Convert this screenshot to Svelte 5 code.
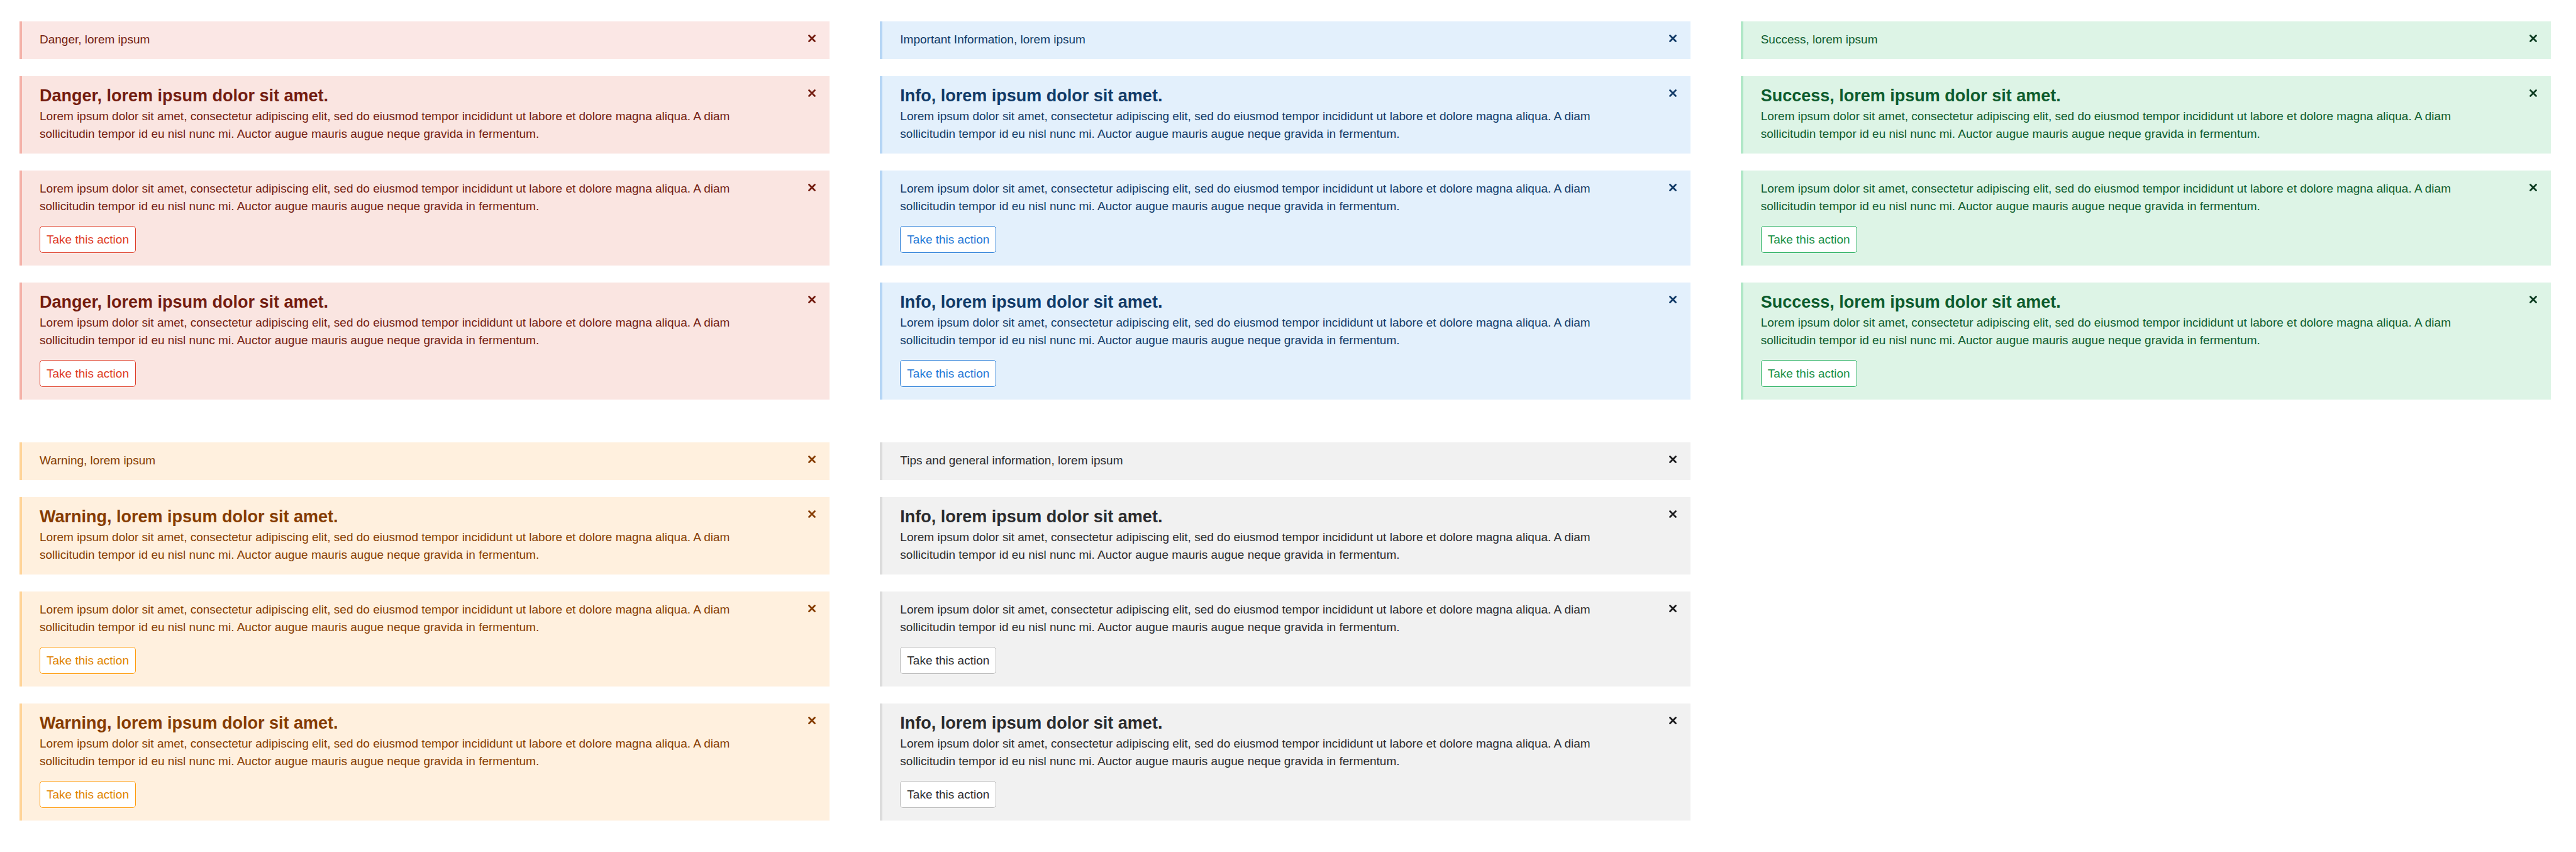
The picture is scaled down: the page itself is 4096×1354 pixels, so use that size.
<script>
  const body =
    'Lorem ipsum dolor sit amet, consectetur adipiscing elit, sed do eiusmod tempor incididunt ut labore et dolore magna aliqua. A diam sollicitudin tempor id eu nisl nunc mi. Auctor augue mauris augue neque gravida in fermentum.';
  const action = 'Take this action';

  const groups = [
    { tone: 'danger', short: 'Danger, lorem ipsum', title: 'Danger, lorem ipsum dolor sit amet.' },
    { tone: 'info', short: 'Important Information, lorem ipsum', title: 'Info, lorem ipsum dolor sit amet.' },
    { tone: 'success', short: 'Success, lorem ipsum', title: 'Success, lorem ipsum dolor sit amet.' },
    { tone: 'warning', short: 'Warning, lorem ipsum', title: 'Warning, lorem ipsum dolor sit amet.' },
    { tone: 'neutral', short: 'Tips and general information, lorem ipsum', title: 'Info, lorem ipsum dolor sit amet.' },
  ].map((g) => ({
    tone: g.tone,
    alerts: [
      { text: g.short, compact: true },
      { title: g.title, text: body },
      { text: body, action },
      { title: g.title, text: body, action },
    ],
  }));
</script>

<main class="board">
  {#each groups as group}
    <section class="group {group.tone}">
      {#each group.alerts as alert}
        <article class="alert" class:compact={alert.compact} class:with-action={alert.action}>
          <div class="content">
            {#if alert.title}<h2>{alert.title}</h2>{/if}
            <p>{alert.text}</p>
            {#if alert.action}<button type="button" class="action">{alert.action}</button>{/if}
          </div>
          <button type="button" class="close" aria-label="Dismiss">
            <svg viewBox="0 0 12 12" aria-hidden="true"><path d="M1.5 1.5 10.5 10.5M10.5 1.5 1.5 10.5" /></svg>
          </button>
        </article>
      {/each}
    </section>
  {/each}
</main>

<style>
  :global(body) {
    margin: 0;
    background: #fff;
  }

  .board {
    display: grid;
    grid-template-columns: repeat(3, 1fr);
    gap: 68px 80px;
    padding: 34px 40px 48px 31px;
    font-family: 'Liberation Sans', Arial, sans-serif;
    font-size: 19px;
    line-height: 28px;
  }

  .group {
    display: flex;
    flex-direction: column;
    gap: 27px;
  }

  .danger {
    --bg: #fae5e1;
    --bg-compact: #fbe7e5;
    --edge: #f4b2a9;
    --text: #731c10;
    --close: #731c10;
    --action: #de3a25;
    --action-edge: #de3a25;
  }
  .info {
    --bg: #e3f0fc;
    --edge: #b5d5f5;
    --text: #113a67;
    --close: #113a67;
    --action: #1f78d6;
    --action-edge: #1f78d6;
  }
  .success {
    --bg: #ddf4e6;
    --edge: #b0e7c7;
    --text: #0d5c2d;
    --close: #0b3b20;
    --action: #158f46;
    --action-edge: #1aab56;
  }
  .warning {
    --bg: #fff0de;
    --edge: #ffd499;
    --text: #863c00;
    --close: #863c00;
    --action: #e08300;
    --action-edge: #ff9b0a;
  }
  .neutral {
    --bg: #f1f1f1;
    --edge: #dcdcdc;
    --text: #2b2b2d;
    --close: #1c1c1e;
    --action: #2b2b2d;
    --action-edge: #b8b8b8;
  }

  .alert {
    display: flex;
    justify-content: space-between;
    gap: 40px;
    padding: 15px 16px 17px 28px;
    border-left: 4px solid var(--edge);
    background: var(--bg);
    color: var(--text);
  }
  .alert.with-action {
    padding-bottom: 20px;
  }
  .alert.compact {
    background: var(--bg-compact, var(--bg));
  }

  .content {
    display: flex;
    flex-direction: column;
    align-items: flex-start;
  }

  h2 {
    margin: 0 0 2px;
    font-size: 27px;
    line-height: 33px;
    font-weight: 700;
  }

  p {
    margin: 0;
  }

  button {
    font: inherit;
    cursor: pointer;
  }

  .action {
    margin-top: 17px;
    padding: 7px 10px 6px;
    border: 1px solid var(--action-edge);
    border-radius: 5px;
    background: #fff;
    color: var(--action);
  }

  .close {
    display: grid;
    place-items: center;
    flex: none;
    width: 24px;
    height: 24px;
    padding: 0;
    border: 0;
    background: none;
    color: var(--close);
  }
  .close svg {
    width: 12px;
    height: 12px;
    fill: none;
    stroke: currentColor;
    stroke-width: 2.7;
    stroke-linecap: round;
  }
</style>
